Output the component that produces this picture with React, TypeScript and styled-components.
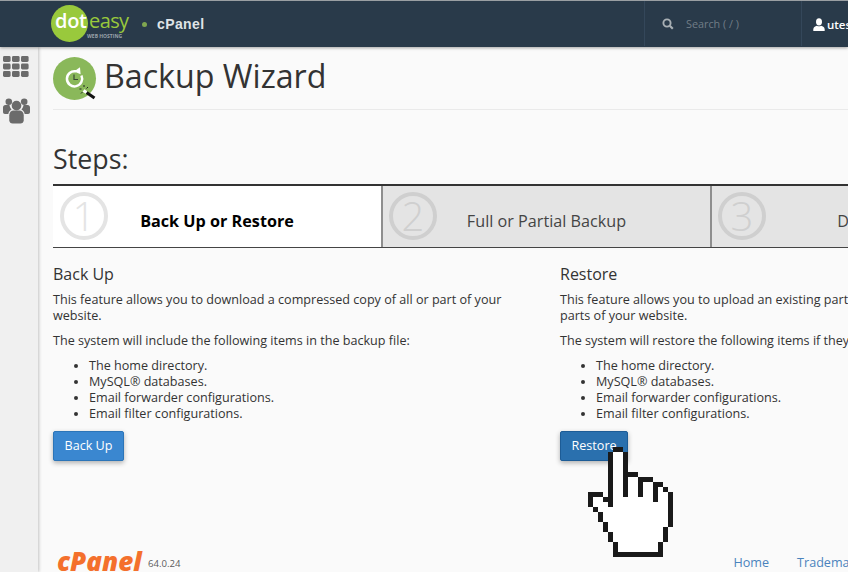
import React from "react";
import styled, { createGlobalStyle } from "styled-components";

const Global = createGlobalStyle`
  html, body { margin: 0; padding: 0; width: 848px; height: 572px; overflow: hidden; background: #fafafa; }
  * { box-sizing: border-box; }
  body { font-family: "Open Sans", "Liberation Sans", sans-serif; color: #333; }
`;

const Page = styled.div`
  position: relative;
  width: 848px;
  height: 572px;
  overflow: hidden;
  display: flex;
  flex-direction: column;
`;

const TopBar = styled.header`
  flex: 0 0 47px;
  display: flex;
  background: #293a4a;
  border-top: 1px solid #9a9fa3;
  box-shadow: 0 1px 3px rgba(0, 0, 0, 0.35);
  position: relative;
  z-index: 2;
`;

const Brand = styled.div`
  width: 644px;
  flex: none;
  display: flex;
  align-items: center;
  padding-left: 51px;
`;

const LogoBall = styled.div`
  position: relative;
  width: 37px;
  height: 37px;
  margin-top: -1px;
  border-radius: 50%;
  background: #99c93c;
  flex: none;
`;

const LogoDot = styled.span`
  position: absolute;
  left: 4px;
  top: 3px;
  font: 600 20px/26px "Open Sans", sans-serif;
  letter-spacing: -0.3px;
  color: #fff;
`;

const LogoEasy = styled.span`
  position: absolute;
  left: 38px;
  top: 3px;
  font: 400 20px/26px "Open Sans", sans-serif;
  letter-spacing: -0.6px;
  color: #99c93c;
`;

const LogoSub = styled.span`
  position: absolute;
  left: 36px;
  top: 28px;
  font: 700 5px/7px "Open Sans", sans-serif;
  white-space: nowrap;
  color: #9aa3aa;
`;

const BrandDot = styled.span`
  width: 5px;
  height: 5px;
  margin-left: 54px;
  border-radius: 50%;
  background: #7fa650;
`;

const BrandName = styled.span`
  margin-left: 10px;
  font: 700 14px/20px "Liberation Sans", Arial, sans-serif;
  letter-spacing: 0.4px;
  color: #dfe3e6;
`;

const SearchBox = styled.div`
  width: 158px;
  flex: none;
  display: flex;
  align-items: center;
  gap: 12px;
  padding-left: 17px;
  margin-bottom: 1px;
  border-left: 1px solid #34475a;
  border-right: 1px solid #34475a;
  font-size: 10.8px;
  color: #717d87;
  svg { flex: none; }
`;

const UserBox = styled.div`
  display: flex;
  align-items: center;
  gap: 2px;
  padding-left: 11px;
  font-size: 11.5px;
  font-weight: 600;
  color: #fff;
  white-space: nowrap;
`;

const Body = styled.div`
  flex: 1;
  display: flex;
  min-height: 0;
`;

const Side = styled.nav`
  flex: 0 0 38px;
  background: #f0f0f0;
  box-shadow: 1px 0 3px rgba(0, 0, 0, 0.22);
  display: flex;
  flex-direction: column;
  padding: 9px 0 0 3px;
  gap: 20px;
`;

const Main = styled.main`
  flex: 1;
  min-width: 0;
  padding: 11px 0 0 15px;
  display: flex;
  flex-direction: column;
`;

const TitleRow = styled.div`
  display: flex;
  align-items: center;
  gap: 6px;
  height: 52px;
  padding-bottom: 9px;
  border-bottom: 1px solid #eaeaea;
`;

const Title = styled.h1`
  margin: -6px 0 0;
  font-size: 32.2px;
  line-height: 40px;
  font-weight: 400;
  color: #333;
`;

const StepsTitle = styled.h2`
  margin: 31px 0 0;
  font-size: 26.8px;
  line-height: 36px;
  font-weight: 400;
  color: #333;
`;

const Steps = styled.div`
  display: flex;
  width: 988px;
  height: 64px;
  margin-top: 7px;
  border-top: 2px solid #333;
  border-bottom: 1px solid #444;
`;

const Step = styled.div<{ $active?: boolean }>`
  position: relative;
  flex: 0 0 ${(p) => (p.$active ? 330 : 329)}px;
  display: flex;
  align-items: center;
  justify-content: center;
  padding-top: 9px;
  font-size: 16.2px;
  line-height: 22px;
  font-weight: ${(p) => (p.$active ? 700 : 400)};
  color: ${(p) => (p.$active ? "#000" : "#444")};
  background: ${(p) => (p.$active ? "#fff" : "#e4e4e4")};
  border-right: 2px solid #8e8e8e;
`;

const StepBadge = styled.span<{ $active?: boolean }>`
  position: absolute;
  left: ${(p) => (p.$active ? 7 : 6)}px;
  top: 6px;
  width: 48px;
  height: 48px;
  border-radius: 50%;
  display: flex;
  align-items: center;
  justify-content: center;
  border: 4px solid ${(p) => (p.$active ? "#e4e4e4" : "#cfcfcf")};
  color: ${(p) => (p.$active ? "#e4e4e4" : "#cfcfcf")};
  font: 300 40px/40px "Open Sans", sans-serif;
`;

const Columns = styled.div`
  display: flex;
  width: 1014px;
  margin-top: 15px;
`;

const Column = styled.section`
  flex: 0 0 507px;
  padding-right: 15px;
  font-size: 12.6px;
  line-height: 16px;
`;

const ColTitle = styled.h3`
  margin: 0 0 7px;
  font-size: 16px;
  line-height: 22px;
  font-weight: 400;
`;

const Para = styled.p`
  margin: 0 0 9px;
`;

const Items = styled.ul`
  margin: 0 0 9px;
  padding-left: 36px;
`;

const Btn = styled.button<{ $dark?: boolean }>`
  display: block;
  height: 30px;
  padding: 0 10.5px;
  border: 1px solid ${(p) => (p.$dark ? "#1d5c96" : "#2c75b8")};
  border-radius: 2px;
  background: ${(p) => (p.$dark ? "#2a70ae" : "#3a87d0")};
  color: #fff;
  font: 400 12.6px/16px "Open Sans", sans-serif;
  box-shadow: 0 2px 5px rgba(0, 0, 0, 0.3);
`;

const Footer = styled.footer`
  display: flex;
  align-items: center;
  width: 900px;
  margin-top: auto;
  height: 22px;
  padding-left: 4px;
`;

const FooterLogo = styled.span`
  flex: 0 0 85px;
  margin-top: -1px;
  font: italic 800 26px/22px "Open Sans", sans-serif;
  letter-spacing: 0;
  color: #f4702c;
`;

const Version = styled.span`
  margin-left: 6px;
  margin-top: 4px;
  font-size: 9.6px;
  color: #5c5c5c;
`;

const FootLinks = styled.div`
  display: flex;
  gap: 28px;
  margin-left: 553px;
  margin-top: 3px;
  font-size: 12.6px;
  color: #4a83bd;
`;

const Cursor = styled.svg`
  position: absolute;
  left: 588px;
  top: 446px;
  width: 85px;
  height: 111px;
  z-index: 5;
`;

const BLACK: number[][] = [
  [5, 0, 2, 1], [4, 1, 1, 11], [7, 1, 1, 9], [8, 5, 2, 1], [10, 6, 1, 4], [11, 6, 2, 1],
  [13, 7, 1, 4], [14, 7, 1, 1], [15, 8, 1, 1], [16, 9, 1, 7], [15, 16, 1, 3], [14, 19, 1, 3],
  [5, 21, 9, 1], [5, 19, 1, 2], [4, 17, 1, 2], [3, 15, 1, 2], [2, 13, 1, 2], [1, 12, 1, 1],
  [0, 9, 1, 3], [1, 9, 2, 1], [3, 10, 1, 1],
];

const Hand = () => (
  <Cursor viewBox="0 0 17 22" shapeRendering="crispEdges">
    <path
      fill="#fff"
      d="M5 1h2v5h3v1h3v1h2v1h1v7h-1v3h-1v2H6v-2H5v-2H4v-2H3v-2H2v-1H1V10h2v1h1V1z"
    />
    {BLACK.map(([x, y, w, h]) => (
      <rect key={`${x}-${y}`} x={x} y={y} width={w} height={h} fill="#1a1a1a" />
    ))}
  </Cursor>
);

const GridIcon = () => (
  <svg width="26" height="21" viewBox="0 0 26 21">
    {[0, 1, 2].flatMap((r) =>
      [0, 1, 2].map((c) => (
        <rect key={`${r}${c}`} x={c * 9} y={r * 7.5} width="7.6" height="6" rx="1.4" fill="#6b6b6b" />
      ))
    )}
  </svg>
);

const UsersIcon = () => (
  <svg width="27" height="27" viewBox="0 0 28 28" fill="#6b6b6b">
    <circle cx="6" cy="5" r="3.4" />
    <circle cx="22" cy="5" r="3.4" />
    <circle cx="14" cy="9" r="5" />
    <path d="M0 11c0-1.5 1-2.6 2.5-2.6h4.2c.3 2 1 3.4 2.2 4.6-1.7 1-3 2.6-3.4 4.6H2c-1.2 0-2-.8-2-2z" />
    <path d="M28 11c0-1.5-1-2.6-2.5-2.6h-4.2c-.3 2-1 3.4-2.2 4.6 1.7 1 3 2.6 3.4 4.6H26c1.2 0 2-.8 2-2z" />
    <path d="M6.5 19c0-3 2-5 4.5-5h6c2.5 0 4.5 2 4.5 5v5c0 2-1.5 3.5-3.5 3.5H10c-2 0-3.5-1.5-3.5-3.5z" />
  </svg>
);

const WizardIcon = () => (
  <svg width="45" height="44" viewBox="0 0 45 44" style={{ flex: "none" }}>
    <circle cx="21.5" cy="21.5" r="21.5" fill="#8ab85a" />
    <path d="M28.4 18.5A7.6 7.6 0 1 1 23 14.3" fill="none" stroke="#fff" strokeWidth="2.5" />
    <path d="M21 14.5l6-4.2.6 7z" fill="#fff" />
    <path d="M21 17.5v5h4" fill="none" stroke="#3b4a35" strokeWidth="1.2" />
    <path d="M33.5 35.5l8 5.6" stroke="#111" strokeWidth="3" />
    <path d="M30.5 33.5l3 2" stroke="#fff" strokeWidth="3" />
    <path d="M31 28v2M35 30l-1.5 1.5M26.5 32h2M28 36.5l1.5-1.5" stroke="#222" strokeWidth="1" />
  </svg>
);

const SearchIcon = () => (
  <svg width="12" height="12" viewBox="0 0 12 12" fill="none" stroke="#a9b0b5">
    <circle cx="5" cy="5" r="3.6" strokeWidth="1.9" />
    <path d="M7.8 7.8l3 3" strokeWidth="2.2" />
  </svg>
);

const UserIcon = () => (
  <svg width="12" height="13" viewBox="0 0 12 13" fill="#fff">
    <ellipse cx="6" cy="3.8" rx="3" ry="3.6" />
    <path d="M0.3 13c-.3-3 .6-4.6 3.6-5.3 1.3.8 2.9.8 4.2 0 3 .7 3.9 2.3 3.6 5.3z" />
  </svg>
);

const backupItems = [
  "The home directory.",
  "MySQL® databases.",
  "Email forwarder configurations.",
  "Email filter configurations.",
];

export default function App() {
  return (
    <Page>
      <Global />
      <TopBar>
        <Brand>
          <LogoBall>
            <LogoDot>dot</LogoDot>
            <LogoEasy>easy</LogoEasy>
            <LogoSub>WEB HOSTING</LogoSub>
          </LogoBall>
          <BrandDot />
          <BrandName>cPanel</BrandName>
        </Brand>
        <SearchBox>
          <SearchIcon />
          <span>Search ( / )</span>
        </SearchBox>
        <UserBox>
          <UserIcon />
          <span>utes</span>
        </UserBox>
      </TopBar>
      <Body>
        <Side>
          <GridIcon />
          <UsersIcon />
        </Side>
        <Main>
          <TitleRow>
            <WizardIcon />
            <Title>Backup Wizard</Title>
          </TitleRow>
          <StepsTitle>Steps:</StepsTitle>
          <Steps>
            <Step $active>
              <StepBadge $active>1</StepBadge>
              Back Up or Restore
            </Step>
            <Step>
              <StepBadge>2</StepBadge>
              Full or Partial Backup
            </Step>
            <Step>
              <StepBadge>3</StepBadge>
              Download
            </Step>
          </Steps>
          <Columns>
            <Column>
              <ColTitle>Back Up</ColTitle>
              <Para>This feature allows you to download a compressed copy of all or part of your website.</Para>
              <Para>The system will include the following items in the backup file:</Para>
              <Items>
                {backupItems.map((t) => (
                  <li key={t}>{t}</li>
                ))}
              </Items>
              <Btn>Back Up</Btn>
            </Column>
            <Column>
              <ColTitle>Restore</ColTitle>
              <Para>This feature allows you to upload an existing partial backup to restore individual parts of your website.</Para>
              <Para>The system will restore the following items if they exist in the backup file:</Para>
              <Items>
                {backupItems.map((t) => (
                  <li key={t}>{t}</li>
                ))}
              </Items>
              <Btn $dark>Restore</Btn>
            </Column>
          </Columns>
          <Footer>
            <FooterLogo>cPanel</FooterLogo>
            <Version>64.0.24</Version>
            <FootLinks>
              <span>Home</span>
              <span>Trademarks</span>
            </FootLinks>
          </Footer>
        </Main>
      </Body>
      <Hand />
    </Page>
  );
}
